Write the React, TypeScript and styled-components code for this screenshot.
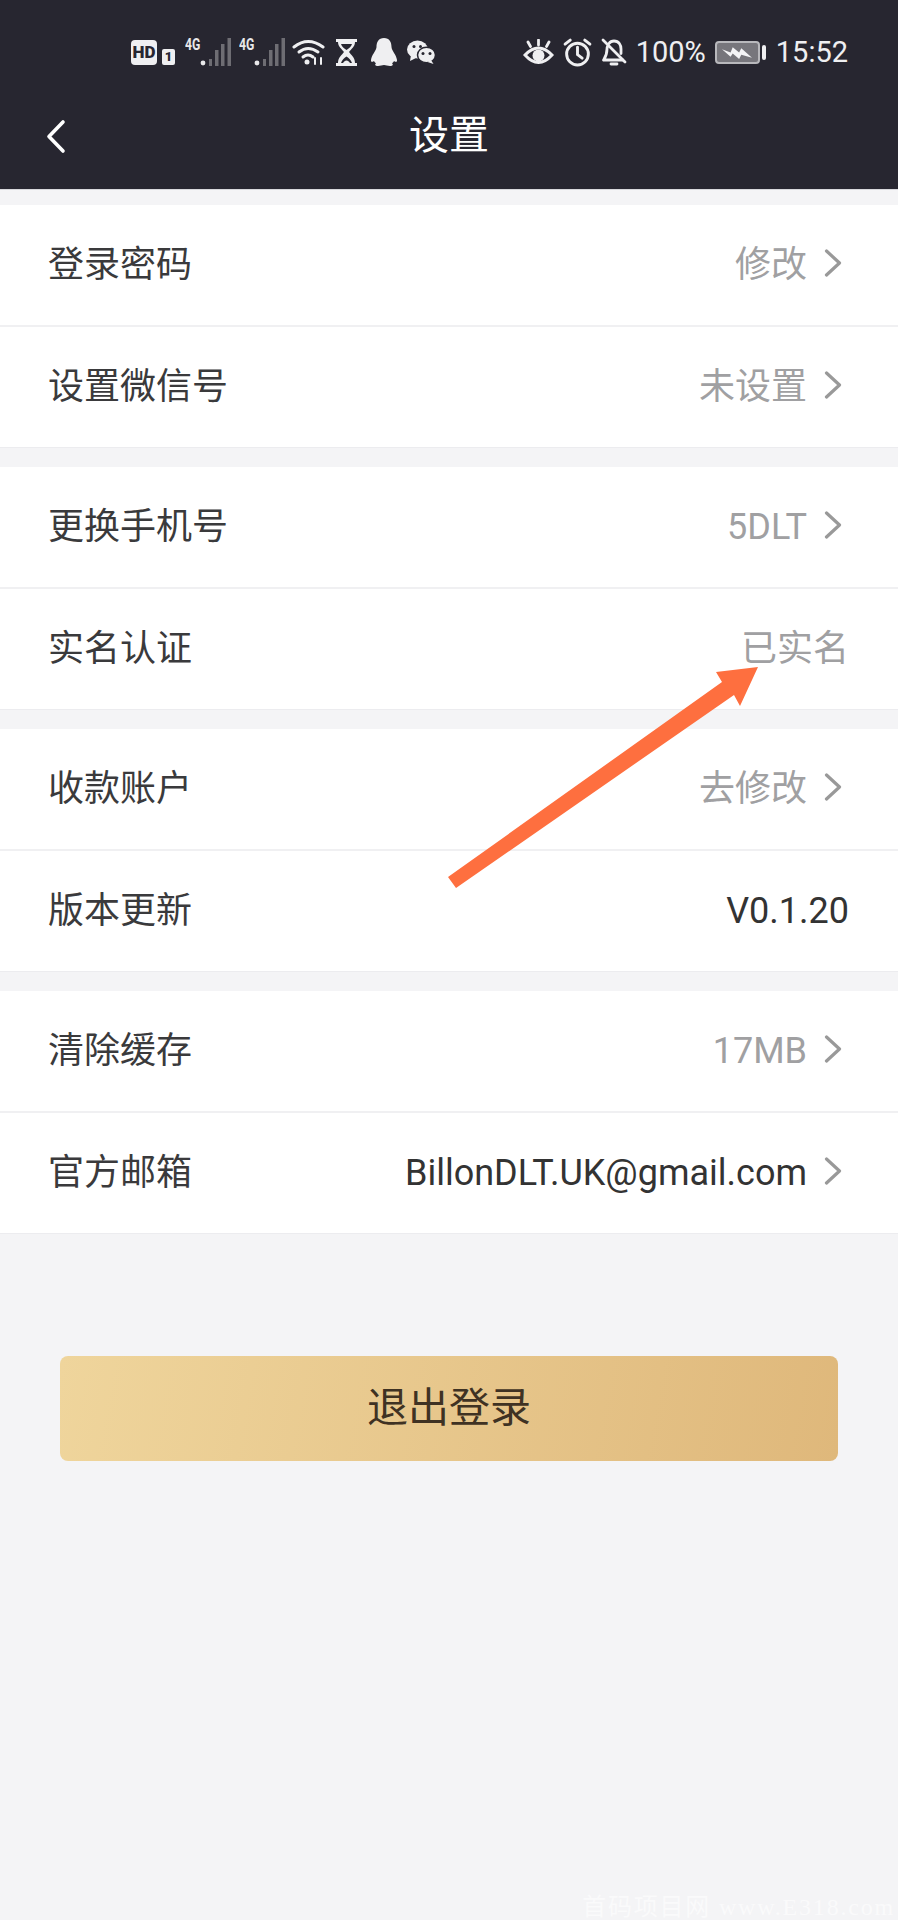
import React from 'react';
import styled, {createGlobalStyle} from 'styled-components';

const GlobalStyle = createGlobalStyle`
  html, body {
    margin: 0;
    padding: 0;
    background: #f4f4f6;
    font-family: Roboto, "Noto Sans CJK SC", sans-serif;
  }
`

type RowData = { label: string; value: string; dark?: boolean; arrow?: boolean; cjk?: boolean }

const groups: RowData[][] = [
    [
        {label: '登录密码', value: '修改', arrow: true, cjk: true},
        {label: '设置微信号', value: '未设置', arrow: true, cjk: true},
    ],
    [
        {label: '更换手机号', value: '5DLT', arrow: true},
        {label: '实名认证', value: '已实名', cjk: true},
    ],
    [
        {label: '收款账户', value: '去修改', arrow: true, cjk: true},
        {label: '版本更新', value: 'V0.1.20', dark: true},
    ],
    [
        {label: '清除缓存', value: '17MB', arrow: true},
        {label: '官方邮箱', value: 'BillonDLT.UK@gmail.com', dark: true, arrow: true},
    ],
]

const SignalIcon = () => (
    <svg width="46" height="28" viewBox="0 0 46 28">
        <circle cx="18" cy="25" r="2.400" fill="#e8e8ea"/>
        <rect x="24" y="21" width="3" height="7" fill="#6e6d73"/>
        <rect x="30" y="12" width="3.500" height="16" fill="#6e6d73"/>
        <rect x="36" y="6" width="3.500" height="22" fill="#6e6d73"/>
        <rect x="42.500" y="0" width="3.500" height="28" fill="#6e6d73"/>
    </svg>
)

const App = () => {
    return (
        <Page>
            <GlobalStyle/>
            <Header>
                <StatusBar>
                    <StatusLeft>
                        <HdBadge>HD</HdBadge>
                        <SimBadge>1</SimBadge>
                        <Network><NetworkLabel>4G</NetworkLabel><SignalIcon/></Network>
                        <Network $second><NetworkLabel>4G</NetworkLabel><SignalIcon/></Network>
                        <StatusIcon $left={7} width="33" height="26" viewBox="0 0 33 26" fill="none" stroke="#efeff1" strokeWidth="3" strokeLinecap="round">
                            <path d="M2 8 Q16 -3 31 8"/>
                            <path d="M7 13 Q16 6 26 13"/>
                            <path d="M11 18 Q16 14 21 18"/>
                            <circle cx="15" cy="23" r="2.500" fill="#efeff1" stroke="none"/>
                            <path d="M23 19v6M29 19v6" strokeWidth="2"/>
                        </StatusIcon>
                        <StatusIcon $left={11} width="21" height="27" viewBox="0 0 21 27">
                            <path d="M0 0h21v3h-2c0 5-4 7-6 10 2 3 6 5 6 11h2v3H0v-3h2c0-6 4-8 6-11C6 10 2 8 2 3H0z" fill="#efeff1"/>
                            <path d="M5 5h11c-1 3-3 4-5.500 6C8 9 6 8 5 5zM5 24c1-3 3-5 5.500-6.500C13 19 15 21 16 24z" fill="#272630"/>
                            <path d="M7 24c1-1.500 2-2.500 3.500-2.500S13 22.500 14 24z" fill="#efeff1"/>
                        </StatusIcon>
                        <StatusIcon $left={13} width="28" height="28" viewBox="0 0 28 28">
                            <path d="M14 0c-5.500 0-7.500 4-7.500 9 0 3.500-5 8-5.500 13-.2 2 1 2.500 3 1 .5 1 1 1.700 2 2.300C4.500 26.500 5 28 8 28c2.500 0 4-1 6-1s3.500 1 6 1c3 0 3.500-1.500 2-2.700 1-.6 1.500-1.300 2-2.300 2 1.500 3.200 1 3-1-.5-5-5.500-9.500-5.500-13 0-5-2-9-7.500-9z" fill="#efeff1"/>
                        </StatusIcon>
                        <StatusIcon $left={9} width="29" height="24" viewBox="0 0 29 24">
                            <ellipse cx="10.500" cy="9.500" rx="10.500" ry="9" fill="#efeff1"/>
                            <path d="M4 15l-1 6 6-3z" fill="#efeff1"/>
                            <ellipse cx="19.500" cy="15" rx="9" ry="7.800" fill="#efeff1" stroke="#272630" strokeWidth="1.500"/>
                            <path d="M24 20l2.500 4-6-2z" fill="#efeff1"/>
                            <circle cx="7" cy="6.500" r="1.500" fill="#272630"/>
                            <circle cx="13.500" cy="6.500" r="1.500" fill="#272630"/>
                            <circle cx="16" cy="13.500" r="1.500" fill="#272630"/>
                            <circle cx="23" cy="13.500" r="1.500" fill="#272630"/>
                        </StatusIcon>
                    </StatusLeft>
                    <StatusRight>
                        <svg width="31" height="27" viewBox="0 0 31 27" fill="none" stroke="#efeff1" strokeWidth="3" strokeLinecap="round">
                            <path d="M2 16 Q15.500 2 29 16 Q15.500 31 2 16z"/>
                            <circle cx="15.500" cy="16.500" r="6" fill="#efeff1" stroke="none"/>
                            <path d="M15.500 1v5M5 3l2.500 4.500M26 3l-2.500 4.500" strokeWidth="2.800"/>
                        </svg>
                        <svg width="29" height="29" viewBox="0 0 28 28" fill="none" stroke="#efeff1" strokeWidth="2.800" strokeLinecap="round">
                            <circle cx="14" cy="15.500" r="10.500"/>
                            <path d="M14 9v7l4.500 3.500"/>
                            <path d="M2 6l5-4M26 6l-5-4"/>
                        </svg>
                        <svg width="26" height="28" viewBox="0 0 26 28" fill="none" stroke="#efeff1" strokeWidth="2.800" strokeLinecap="round" strokeLinejoin="round">
                            <path d="M2 2l22 22"/>
                            <path d="M8 5.500C9 4 11 3 13 3c5 0 7 4 7 8v4.500"/>
                            <path d="M6.500 8.500C6 9.500 6 10 6 11c0 6-1.500 8-3.500 11h19"/>
                            <path d="M10 26h6"/>
                        </svg>
                        <StatusText>100%</StatusText>
                        <Battery>
                            <BatteryBody>
                                <svg width="30" height="13" viewBox="0 0 28 12">
                                    <path d="M0 3l8 3 2-5 6 5 2-4 10 9-10-3-2 4-6-5-2 3z" fill="#f4f4f6"/>
                                </svg>
                            </BatteryBody>
                            <BatteryNub/>
                        </Battery>
                        <StatusText>15:52</StatusText>
                    </StatusRight>
                </StatusBar>
                <NavBar>
                    <BackButton>
                        <svg width="22" height="36" viewBox="0 0 22 36" fill="none" stroke="#fff" strokeWidth="3.600" strokeLinecap="round" strokeLinejoin="round">
                            <path d="M18 3 L4 17.500 L18 32"/>
                        </svg>
                    </BackButton>
                    <Title>设置</Title>
                </NavBar>
            </Header>
            {groups.map((group, i) => (
                <Group key={i}>
                    {group.map(row => (
                        <Row key={row.label}>
                            <Label>{row.label}</Label>
                            <Value $dark={row.dark} $cjk={row.cjk}>{row.value}</Value>
                            {row.arrow && (
                                <Chevron width="18" height="28" viewBox="0 0 18 28" fill="none" stroke="#999" strokeWidth="3.200" strokeLinecap="round" strokeLinejoin="round">
                                    <path d="M2.500 2 L15.500 14 L2.500 26"/>
                                </Chevron>
                            )}
                        </Row>
                    ))}
                </Group>
            ))}
            <LogoutButton>退出登录</LogoutButton>
            <Annotation width="320" height="230" viewBox="0 0 320 230">
                <polygon points="0,210 274,15 268,5 310,0 292,39 286,28 8,221" fill="#fe6f3f"/>
            </Annotation>
            <Watermark>首码项目网 www.E318.com</Watermark>
        </Page>
    );
};

export default App;


const Page = styled.div`
  position: relative;
  width: 898px;
  height: 1920px;
  overflow: hidden;
  background: #f4f4f6;
`

const Header = styled.header`
  height: 190px;
  background: #272630;
  border-bottom: 1px solid #d8d8dc;
  box-sizing: border-box;
`

const StatusBar = styled.div`
  height: 82px;
  padding: 22px 50px 0 131px;
  box-sizing: border-box;
  display: flex;
  align-items: center;
  justify-content: space-between;
  color: #efeff1;
`

const StatusLeft = styled.div`
  display: flex;
  align-items: center;
`

const StatusRight = styled.div`
  display: flex;
  align-items: center;
  gap: 9px;
`

const StatusIcon = styled.svg<{ $left: number }>`
  margin-left: ${props => props.$left}px;
`

const HdBadge = styled.span`
  width: 26px;
  height: 25px;
  border-radius: 4px;
  background: #efeff1;
  color: #272630;
  font-size: 17px;
  font-weight: 900;
  line-height: 25px;
  text-align: center;
`

const SimBadge = styled.span`
  width: 13px;
  height: 16px;
  margin: 9px 0 0 5px;
  border-radius: 2px;
  background: #efeff1;
  color: #272630;
  font-size: 13px;
  font-weight: 900;
  line-height: 16px;
  text-align: center;
`

const Network = styled.div<{ $second?: boolean }>`
  position: relative;
  width: 46px;
  height: 28px;
  margin-left: ${props => props.$second ? 8 : 10}px;
`

const NetworkLabel = styled.span`
  position: absolute;
  top: -2px;
  left: 0;
  font-size: 17px;
  line-height: 17px;
  font-weight: 700;
  color: #e8e8ea;
  transform: scaleX(.72);
  transform-origin: left top;
`

const StatusText = styled.span`
  font-size: 29px;
  line-height: 34px;
  color: #efeff1;
`

const Battery = styled.div`
  display: flex;
  align-items: center;
  gap: 2px;
  margin-right: 1px;
`

const BatteryBody = styled.div`
  width: 45px;
  height: 23px;
  box-sizing: border-box;
  border: 2px solid #b8b8bc;
  border-radius: 4px;
  background: #77767c;
  display: flex;
  align-items: center;
  justify-content: center;
`

const BatteryNub = styled.div`
  width: 4px;
  height: 15px;
  border-radius: 2px;
  background: #efeff1;
`

const NavBar = styled.div`
  position: relative;
  height: 107px;
  display: flex;
  align-items: center;
  justify-content: center;
`

const BackButton = styled.div`
  position: absolute;
  left: 45px;
  top: 37px;
  line-height: 0;
`

const Title = styled.h1`
  margin: 0 0 7px;
  font-size: 40px;
  font-weight: 400;
  color: #fff;
`

const Group = styled.section`
  margin-top: 15px;
  background: #fff;
  border-bottom: 1px solid #ececef;

  & + & {
    margin-top: 19px;
  }
`

const Row = styled.div`
  height: 120px;
  padding: 0 49px 0 48px;
  display: flex;
  align-items: center;
  font-size: 36px;

  & + & {
    border-top: 2px solid #f0f0f2;
  }
`

const Label = styled.span`
  flex: 1;
  margin-bottom: 8px;
  color: #3a3a3c;
`

const Value = styled.span<{ $dark?: boolean; $cjk?: boolean }>`
  margin-bottom: ${props => props.$cjk ? 8 : 0}px;
  color: ${props => props.$dark ? '#333' : '#a0a0a2'};
`

const Chevron = styled.svg`
  margin: 0 7px 4px 17px;
`

const LogoutButton = styled.button`
  display: block;
  width: 778px;
  height: 105px;
  margin: 122px 0 0 60px;
  padding: 0 0 10px;
  border: 0;
  border-radius: 8px;
  background: linear-gradient(100deg, #efd59c 0%, #dfb87b 100%);
  color: #3f3223;
  font-family: inherit;
  font-size: 41px;
`

const Annotation = styled.svg`
  position: absolute;
  left: 448px;
  top: 667px;
`

const Watermark = styled.span`
  position: absolute;
  right: 3px;
  bottom: 0;
  font-family: "Liberation Serif", "Noto Sans CJK SC", serif;
  font-size: 24px;
  line-height: 26px;
  letter-spacing: 1.800px;
  color: #fafafb;
  white-space: nowrap;
`
